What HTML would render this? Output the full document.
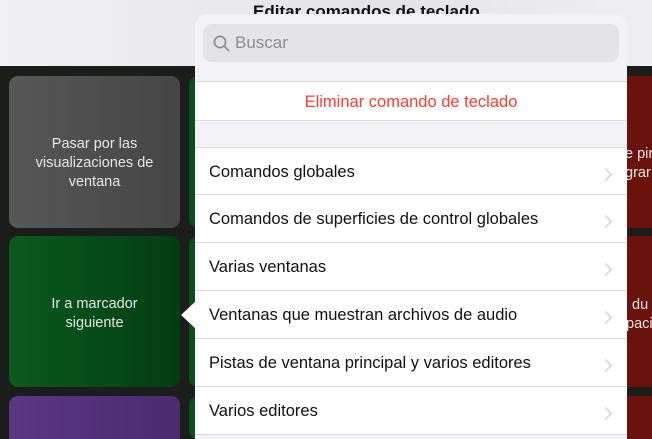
<!DOCTYPE html>
<html style="width:652px;height:439px;overflow:hidden"><head><style>
*{margin:0;padding:0;box-sizing:border-box}
body{width:652px;height:439px;overflow:hidden;background:#1b1d1b;font-family:"Liberation Sans",sans-serif;position:relative}
.top{position:absolute;left:0;top:0;width:652px;height:66px;background:linear-gradient(90deg,#f1f1f4,#e4e4e8 60%,#f0f0f3)}
.title{position:absolute;left:253px;top:2px;font-size:17px;font-weight:bold;color:#111}
.tile{position:absolute;border-radius:9px;color:#e6e6e6;font-size:14.5px;text-align:center;line-height:19px;display:flex;align-items:center;justify-content:center}
.pop{position:absolute;left:195px;top:14px;width:432px;height:425px;background:#f2f2f7;border-radius:13px 13px 0 0;overflow:hidden}
.search{position:absolute;left:8px;top:10px;width:416px;height:38px;background:#e3e3e8;border-radius:9px;color:#8e8e93;font-size:17px;line-height:38px;padding-left:32px}
.del{position:absolute;left:0;top:67px;width:432px;height:40px;background:#fff;color:#ff3b30;font-size:16.5px;text-align:center;line-height:40px;border-top:1px solid #dcdce0;border-bottom:1px solid #dcdce0}
.row{position:absolute;left:0;width:432px;height:48px;background:#fff;font-size:16.5px;color:#111;line-height:48px;padding-left:14px;border-bottom:1px solid #d8d8dc}
.row:after{content:"";position:absolute;right:17px;top:22px;width:8px;height:8px;border-right:1.8px solid #c4c4c8;border-top:1.8px solid #c4c4c8;transform:rotate(45deg)}
</style></head><body>
<div class="top"><div class="title">Editar comandos de teclado</div></div>
<div class="tile" style="left:9px;top:76px;width:171px;height:152px;padding-top:22px;background:linear-gradient(90deg,#575757,#454545)">Pasar por las<br>visualizaciones de<br>ventana</div>
<div class="tile" style="left:9px;top:236px;width:171px;height:151px;padding-top:4px;background:linear-gradient(90deg,#0a5a1e,#033d12)">Ir a marcador<br>siguiente</div>
<div class="tile" style="left:9px;top:396px;width:171px;height:43px;border-radius:9px 9px 0 0;background:linear-gradient(90deg,#5b3684,#4b2b6e)"></div>
<div class="tile" style="left:189px;top:76px;width:20px;height:152px;background:#0a4f19"></div>
<div class="tile" style="left:189px;top:236px;width:20px;height:151px;background:#0a4f19"></div>
<div class="tile" style="left:189px;top:396px;width:20px;height:43px;background:#0a4f19"></div>
<div class="tile" style="left:622px;top:76px;width:40px;height:152px;background:#69130c;justify-content:flex-start;border-radius:0;padding-top:24px"><span style="margin-left:3px;text-align:left;white-space:nowrap;font-size:14.5px;line-height:19px">e pir<br>grar</span></div>
<div class="tile" style="left:622px;top:236px;width:40px;height:151px;background:#69130c;justify-content:flex-start;border-radius:0;padding-top:6px"><span style="margin-left:4px;text-align:left;white-space:nowrap;line-height:19px"><span style="margin-left:6px">du</span><br>paci</span></div>
<div class="tile" style="left:622px;top:396px;width:40px;height:43px;background:#69130c;border-radius:0"></div>
<div style="position:absolute;left:181px;top:301px;width:0;height:0;border-top:14px solid transparent;border-bottom:14px solid transparent;border-right:15px solid #fff"></div>
<div class="pop">
<div class="search"><svg style="position:absolute;left:10px;top:11px" width="17" height="17" viewBox="0 0 17 17"><circle cx="7" cy="7" r="5.6" fill="none" stroke="#8e8e93" stroke-width="1.7"/><path d="M11 11l4.5 4.5" stroke="#8e8e93" stroke-width="1.8" stroke-linecap="round"/></svg>Buscar</div>
<div class="del">Eliminar comando de teclado</div>
<div class="row" style="top:133px;border-top:1px solid #d8d8dc">Comandos globales</div>
<div class="row" style="top:181px">Comandos de superficies de control globales</div>
<div class="row" style="top:229px">Varias ventanas</div>
<div class="row" style="top:277px">Ventanas que muestran archivos de audio</div>
<div class="row" style="top:325px">Pistas de ventana principal y varios editores</div>
<div class="row" style="top:373px">Varios editores</div>
</div>
</body></html>
